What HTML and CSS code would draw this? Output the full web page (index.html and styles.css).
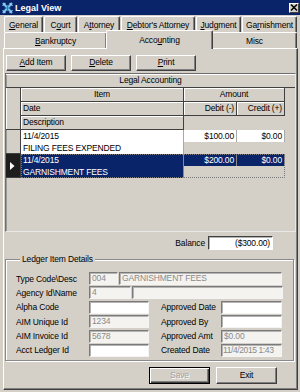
FILE: index.html
```html
<!DOCTYPE html>
<html>
<head>
<meta charset="utf-8">
<title>Legal View</title>
<link rel="stylesheet" href="styles.css">
</head>
<body>
<div class="window">
  <div class="titlebar">
    <svg class="appicon" viewBox="0 0 11 12" width="11" height="12">
      <path d="M1 1 L10 11 M10 1 L1 11" stroke="#6fc0ea" stroke-width="2.2" fill="none"/>
      <path d="M0.5 4 L3.5 1 M7.5 1 L10.5 4 M0.5 8 L3.5 11 M7.5 11 L10.5 8" stroke="#b9e6fb" stroke-width="1" fill="none"/>
      <path d="M5.5 3 L5.5 9 M2.5 6 L8.5 6" stroke="#2f7fc4" stroke-width="1" fill="none"/>
    </svg>
    <span class="title">Legal View</span>
    <span class="close"><svg viewBox="0 0 8 7" width="8" height="7"><path d="M1 0.5 L7 6.5 M7 0.5 L1 6.5" stroke="#000" stroke-width="1.5" fill="none"/></svg></span>
  </div>

  <div class="tabs">
    <div class="tabrow row1">
      <div class="tab t-general"><u>G</u>eneral</div>
      <div class="tab t-court">C<u>o</u>urt</div>
      <div class="tab t-attorney">A<u>t</u>torney</div>
      <div class="tab t-debtor"><u>D</u>ebtor's Attorney</div>
      <div class="tab t-judgment"><u>J</u>udgment</div>
      <div class="tab t-garn">Ga<u>r</u>nishment</div>
    </div>
    <div class="tabrow row2">
      <div class="tab t-bank"><u>B</u>ankruptcy</div>
      <div class="tab t-acct active">Acco<u>u</u>nting</div>
      <div class="tab t-misc">Misc</div>
    </div>
  </div>

  <div class="panel">
    <div class="toolbar">
      <div class="btn"><u>A</u>dd Item</div>
      <div class="btn"><u>D</u>elete</div>
      <div class="btn"><u>P</u>rint</div>
    </div>

    <div class="grid">
      <div class="caption">Legal Accounting</div>
      <div class="block hdr">
        <div class="sel hsel"></div>
        <div class="body">
          <div class="line">
            <div class="h c-item center">Item</div>
            <div class="h c-amt center">Amount</div>
          </div>
          <div class="line">
            <div class="h c-item">Date</div>
            <div class="h c-deb right">Debit (-)</div>
            <div class="h c-cred right">Credit (+)</div>
          </div>
          <div class="line">
            <div class="h c-item">Description</div>
          </div>
        </div>
      </div>

      <div class="block rec">
        <div class="sel"></div>
        <div class="body">
          <div class="dline">
            <div class="d c-item">11/4/2015</div>
            <div class="d c-deb right">$100.00</div>
            <div class="d c-cred right">$0.00</div>
          </div>
          <div class="dline">
            <div class="d c-item">FILING FEES EXPENDED</div>
          </div>
        </div>
      </div>

      <div class="block rec current">
        <div class="sel cursel"><svg viewBox="0 0 5 8" width="5" height="8"><path d="M0 0 L4.5 4 L0 8 Z" fill="#fff"/></svg></div>
        <div class="body focus">
          <div class="dline">
            <div class="d c-item">11/4/2015</div>
            <div class="d c-deb right">$200.00</div>
            <div class="d c-cred right">$0.00</div>
          </div>
          <div class="dline">
            <div class="d c-item">GARNISHMENT FEES</div>
          </div>
        </div>
      </div>
    </div>

    <div class="balance">
      <span class="blabel">Balance</span>
      <div class="field bal">($300.00)</div>
    </div>

    <fieldset class="group">
      <legend>Ledger Item Details</legend>
      <div class="frow">
        <span class="lbl">Type Code\Desc</span>
        <div class="field dis w-code">004</div>
        <div class="field dis w-desc">GARNISHMENT FEES</div>
      </div>
      <div class="frow">
        <span class="lbl">Agency Id\Name</span>
        <div class="field dis w-agency">4</div>
        <div class="field dis w-name"></div>
      </div>
      <div class="frow">
        <span class="lbl">Alpha Code</span>
        <div class="field w-left"></div>
        <span class="rlbl">Approved Date</span>
        <div class="field w-right"></div>
      </div>
      <div class="frow">
        <span class="lbl">AIM Unique Id</span>
        <div class="field dis w-left">1234</div>
        <span class="rlbl">Approved By</span>
        <div class="field w-right"></div>
      </div>
      <div class="frow">
        <span class="lbl">AIM Invoice Id</span>
        <div class="field dis w-left">5678</div>
        <span class="rlbl">Approved Amt</span>
        <div class="field dis w-right">$0.00</div>
      </div>
      <div class="frow">
        <span class="lbl">Acct Ledger Id</span>
        <div class="field w-left"></div>
        <span class="rlbl">Created Date</span>
        <div class="field dis w-right tight">11/4/2015 1:43</div>
      </div>
    </fieldset>

    <div class="actions">
      <div class="btn big default disabled">Save</div>
      <div class="btn big">Exit</div>
    </div>
  </div>
</div>
</body>
</html>
```

FILE: styles.css
```css
* { box-sizing: border-box; }

body {
  margin: 0;
  background: #d4d0c8;
  font-family: "Liberation Sans", Arial, sans-serif;
  font-size: 8.5px;
  letter-spacing: -0.15px;
  color: #000;
}

u { text-decoration: underline; text-underline-offset: 1px; }

.window {
  width: 300px;
  height: 392px;
  overflow: hidden;
  display: flex;
  flex-direction: column;
}

/* title bar */
.titlebar {
  height: 15px;
  flex: none;
  background: #0a246a;
  display: flex;
  align-items: center;
  padding: 0 1px 0 2px;
}
.appicon { flex: none; }
.title {
  flex: 1;
  color: #fff;
  font-weight: bold;
  font-size: 9px;
  letter-spacing: 0;
  margin-left: 2px;
}
.close {
  width: 10px;
  height: 10px;
  background: #d4d0c8;
  border: 1px solid;
  border-color: #fff #404040 #404040 #fff;
  display: flex;
  align-items: center;
  justify-content: center;
}
.close svg { display: block; }

/* tabs */
.tabs {
  flex: none;
  padding: 1px 0 0 4px;
}
.tabrow {
  display: flex;
  height: 16px;
}
.row1 { gap: 1px; }
.tab {
  height: 16px;
  border: 1px solid;
  border-color: #fff #404040 transparent #fff;
  border-bottom: none;
  border-radius: 2px 2px 0 0;
  box-shadow: inset -1px 0 #808080;
  background: #d4d0c8;
  text-align: center;
  line-height: 12px;
  padding-top: 2px;
  white-space: nowrap;
}
.t-general { width: 39px; }
.t-court { width: 33px; }
.t-attorney { width: 42px; }
.t-debtor { width: 74px; }
.t-judgment { width: 45px; }
.t-garn { width: 55px; }
.t-bank { width: 103px; }
.t-acct { width: 107px; }
.t-misc { width: 85px; }
.tab.active {
  position: relative;
  z-index: 1;
  height: 19px;
  margin: -2px -1px -1px -1px;
  padding-top: 3px;
}

/* panel */
.panel {
  flex: 1;
  margin: 0 2px 2px 3px;
  border: 1px solid;
  border-color: #fff #404040 #404040 #fff;
  box-shadow: inset -1px -1px #808080;
  padding: 6px 1px 0 1px;
  display: flex;
  flex-direction: column;
}

.btn {
  height: 16px;
  border: 1px solid;
  border-color: #fff #404040 #404040 #fff;
  box-shadow: inset -1px -1px #808080;
  text-align: center;
  line-height: 13px;
  white-space: nowrap;
}
.toolbar {
  display: flex;
  gap: 5px;
  margin-left: 1px;
}
.toolbar .btn { width: 60px; }

/* grid */
.grid {
  margin-top: 2px;
  width: 291px;
  height: 159px;
  flex: none;
  border: 1px solid;
  border-color: #6e6e6e #e8e8e8 #e8e8e8 #6e6e6e;
  box-shadow: inset 1px 1px #9a9a9a;
}
.caption {
  height: 14px;
  text-align: center;
  line-height: 12px;
  border-bottom: 1px solid #404040;
  box-shadow: inset 0 1px #fff;
}
.block {
  display: flex;
}
.sel {
  width: 15px;
  flex: none;
  border-right: 1px solid #404040;
  border-bottom: 1px solid #404040;
}
.hsel { box-shadow: inset 1px 0 #fff; }
.cursel {
  background: #1e1e1e;
  display: flex;
  align-items: center;
  justify-content: center;
  padding-right: 1px;
}
.cursel svg { display: block; }
.body { display: flex; flex-direction: column; }
.line { display: flex; height: 14px; }
.h {
  height: 14px;
  border-right: 1px solid #404040;
  border-bottom: 1px solid #404040;
  box-shadow: inset 1px 1px #fff;
  line-height: 13px;
  padding: 0 2px;
  white-space: nowrap;
}
.c-item { width: 163px; }
.c-amt { width: 101px; }
.c-deb { width: 53px; }
.c-cred { width: 48px; }
.center { text-align: center; }
.right { text-align: right; }

.dline { display: flex; height: 12px; }
.d {
  height: 12px;
  background: #fff;
  border-right: 1px solid #a8a8a8;
  line-height: 12px;
  padding: 0 2px;
  white-space: nowrap;
  overflow: hidden;
}
.current .d {
  background: #0a246a;
  color: #fff;
  border-right-color: #8a8a8a;
}
.focus {
  outline: 1px dotted #7a7a7a;
  outline-offset: -1px;
}

/* balance */
.balance {
  margin-top: 4px;
  display: flex;
  justify-content: flex-end;
  align-items: center;
  gap: 3px;
  padding-right: 23px;
}
.field {
  height: 13px;
  background: #fff;
  border: 1px solid;
  border-color: #7a7a7a #f4f4f4 #f4f4f4 #7a7a7a;
  box-shadow: inset 1px 1px #b4b4b4;
  padding: 0 2px;
  line-height: 11px;
  white-space: nowrap;
  overflow: hidden;
  flex: none;
}
.field.bal {
  width: 65px;
  height: 14px;
  text-align: right;
  line-height: 12px;
  border-color: #404040 #fff #fff #404040;
}
.field.dis {
  background: #f4f3f0;
  color: #8a8a8a;
}
.field.tight {
  padding: 0 0 0 1px;
  letter-spacing: -0.4px;
}

/* group box */
.group {
  margin: 4px 0 0 0;
  width: 289px;
  min-width: 0;
  border: 1px solid #8a8a8a;
  box-shadow: inset 1px 1px #fff, 1px 1px #fff;
  padding: 8px 0 3px 10px;
  display: flex;
  flex-direction: column;
  gap: 1.4px;
}
.group legend {
  margin-left: 4px;
  padding: 0 2px;
  line-height: 10px;
  background: #d4d0c8;
}
.frow {
  display: flex;
  align-items: center;
  height: 13px;
}
.lbl { width: 73px; flex: none; white-space: nowrap; }
.rlbl { width: 60px; margin-left: 12px; flex: none; white-space: nowrap; }
.w-code { width: 29px; }
.w-desc { width: 163px; margin-left: 1px; }
.w-agency { width: 42px; }
.w-name { width: 151px; margin-left: 1px; }
.w-left { width: 60px; }
.w-right { width: 61px; }

/* actions */
.actions {
  margin-top: 6px;
  display: flex;
  justify-content: flex-end;
  gap: 6px;
  padding-right: 19px;
}
.btn.big {
  width: 61px;
  height: 17px;
  line-height: 14px;
}
.btn.default {
  border-color: #000;
  box-shadow: inset 1px 1px #fff, inset -1px -1px #404040, inset -2px -2px #808080;
}
.btn.disabled {
  color: #a0a0a0;
  text-shadow: 1px 1px #fff;
}
```
